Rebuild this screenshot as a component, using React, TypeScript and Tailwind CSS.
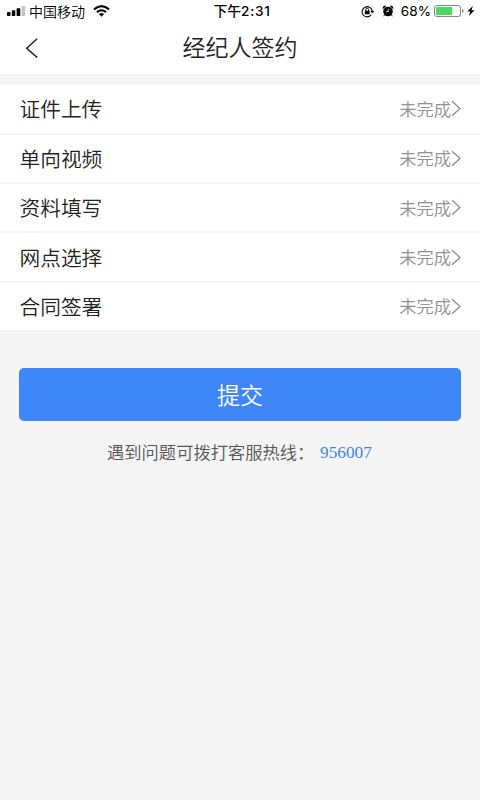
const steps = ['证件上传', '单向视频', '资料填写', '网点选择', '合同签署'];

function StatusBar() {
  return (
    <div className="flex h-[22px] items-center justify-between pl-[7px] pr-[5px] text-black">
      <div className="flex w-[150px] items-center">
        <svg width="19" height="10" viewBox="0 0 19 10" className="mr-[3px]">
          <rect x="0" y="6" width="3.5" height="4" rx="0.8" />
          <rect x="4.8" y="4.3" width="3.5" height="5.7" rx="0.8" />
          <rect x="9.6" y="2.3" width="3.7" height="7.7" rx="0.8" />
          <rect x="14.6" y="0" width="3.6" height="10" rx="0.8" fill="#c4c4c4" />
        </svg>
        <span className="-mt-px text-[14px] font-[350] leading-[22px]">中国移动</span>
        <svg width="17" height="12" viewBox="0 0 17 12" className="ml-[8px] -mt-px" fill="none" stroke="#000">
          <path d="M1 4.4Q8.5-2 16 4.4" strokeWidth="2.2" />
          <path d="M3.9 7.1Q8.5 3.4 13.1 7.1" strokeWidth="2" />
          <path d="M8.5 11.7L5.9 9.1Q8.5 7.1 11.1 9.1Z" fill="#000" stroke="none" />
        </svg>
      </div>
      <div className="-mt-px pl-[2px] text-[13.8px] font-medium leading-[22px] whitespace-nowrap">
        下午<span className="font-['Inter'] text-[13.6px] font-medium tracking-[0.7px]">2:31</span>
      </div>
      <div className="flex w-[150px] items-center justify-end">
        <svg width="14" height="13" viewBox="0 0 14 13" fill="none" stroke="#000">
          <path d="M10.3 9.8A5.1 5.1 0 1 1 11.2 5.9" strokeWidth="1.1" />
          <path d="M9.3 5.8H13.3L11.3 8.5Z" fill="#000" stroke="none" />
          <rect x="3.8" y="5.7" width="4.8" height="3.6" fill="#000" stroke="none" />
          <path d="M4.8 6V4.6a1.4 1.4 0 0 1 2.8 0V6" strokeWidth="0.9" />
        </svg>
        <svg width="12" height="12" viewBox="0 0 12 12" className="ml-[7px]">
          <circle cx="6" cy="6.5" r="4.8" />
          <path d="M.5 3.3Q.8.9 3.3.6L4 1.3L1 4ZM11.5 3.3Q11.2.9 8.7.6L8 1.3L11 4ZM2.2 9.4L1.2 11.4L2.8 10.8ZM9.8 9.4L10.8 11.4L9.2 10.8Z" />
          <path d="M6.2 3.8V6.7H4" fill="none" stroke="#fff" strokeWidth="0.8" />
        </svg>
        <span className="ml-[7px] font-['Inter'] text-[13.6px] leading-[22px]">68%</span>
        <svg width="31" height="12" viewBox="0 0 31 12" className="ml-[3px]">
          <rect x=".5" y=".5" width="26" height="11" rx="2.5" fill="#fff" stroke="#777" strokeWidth="0.9" />
          <rect x="2" y="2" width="16.3" height="8" rx=".8" fill="#4cd964" />
          <path d="M28 4Q29.6 4.5 29.6 6T28 8Z" fill="#888" />
        </svg>
        <svg width="8" height="10" viewBox="0 0 8 10" className="ml-[2px]">
          <path d="M5.8 0L.3 5.5H3.3L1.8 10L7.6 4.2H4.5Z" />
        </svg>
      </div>
    </div>
  );
}

export default function App() {
  return (
    <div className="flex h-[800px] w-[480px] flex-col overflow-hidden bg-[#f4f4f4] font-['Noto_Sans_CJK_SC',sans-serif]">
      <header className="h-[74px] bg-white">
        <StatusBar />
        <nav className="grid h-[52px] grid-cols-[60px_1fr_60px] items-center">
          <button aria-label="返回" className="pl-[25px]">
            <svg width="14" height="20" viewBox="0 0 14 20" fill="none" stroke="#222" strokeWidth="1.5">
              <path d="M12.2 .7L1.7 10.2L12.2 19.6" />
            </svg>
          </button>
          <h1 className="-mt-[3px] text-center text-[23px] font-[350] leading-[49px] text-[#222]">经纪人签约</h1>
        </nav>
      </header>

      <ul className="mt-[11.2px] flex flex-col gap-[2px]">
        {steps.map((step) => (
          <li key={step} className="flex h-[47.4px] items-center justify-between bg-white pl-[19.5px] pr-[19px]">
            <span className="text-[20.7px] font-[350] text-[#222]">{step}</span>
            <span className="flex items-center text-[17.3px] font-[350] text-[#929292]">
              未完成
              <svg width="10" height="17" viewBox="0 0 10 17" fill="none" stroke="#888" strokeWidth="1.2">
                <path d="M1 1.2L9 8.5L1 15.8" />
              </svg>
            </span>
          </li>
        ))}
      </ul>

      <button className="mx-[19px] mt-[37.8px] h-[53px] rounded-[5px] bg-[#3f86f8] text-[23px] font-[350] text-white">
        提交
      </button>

      <p className="mt-[18px] flex pl-[107px] text-[17.3px] font-[350] leading-[26px] text-[#555]">
        <span className="w-[213px] whitespace-nowrap">遇到问题可拨打客服热线：</span>
        <a className="mt-px font-['Liberation_Serif',serif] text-[17.3px] font-normal text-[#3f86e8]">956007</a>
      </p>
    </div>
  );
}
